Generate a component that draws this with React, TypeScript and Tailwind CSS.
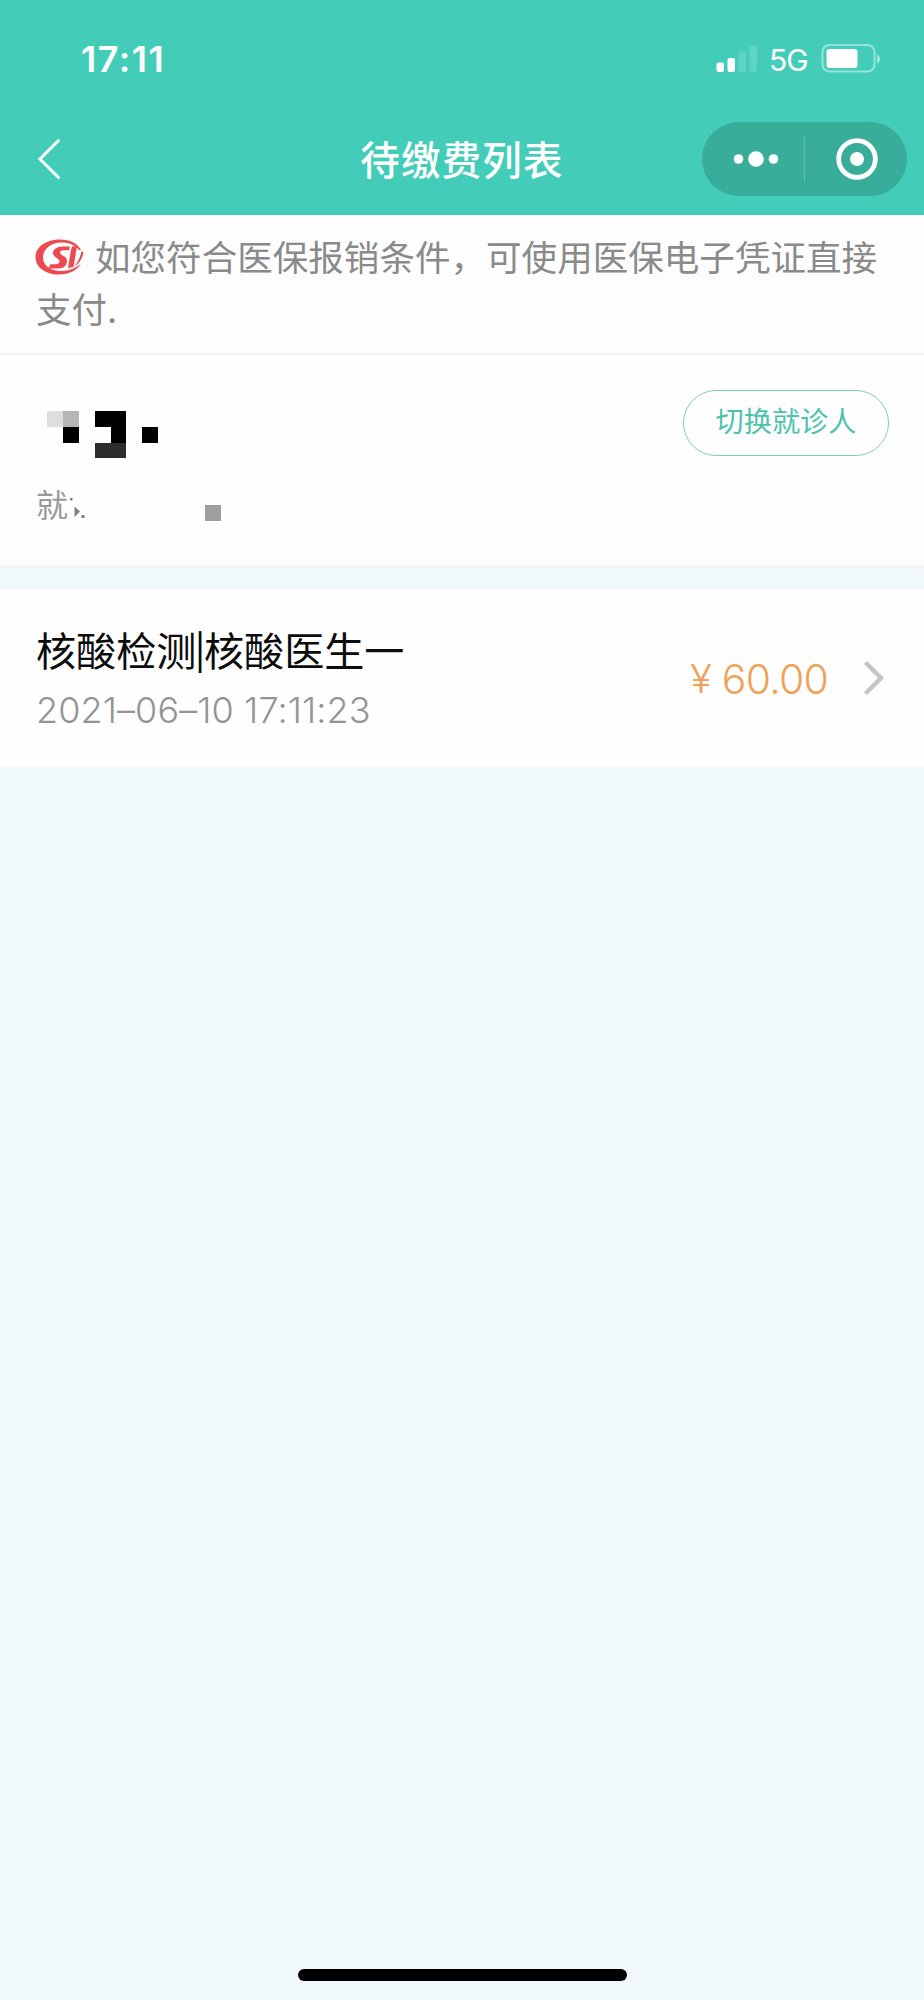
type Bill = {
  id: number;
  item: string;
  doctor: string;
  time: string;
  amount: string;
};

const bills: Bill[] = [
  { id: 1, item: "核酸检测", doctor: "核酸医生一", time: "2021–06–10 17:11:23", amount: "60.00" },
];

const StatusBar = () => (
  <div className="flex h-[118px] items-center justify-between pl-[81px] pr-[43px]">
    <span className="text-[36px] font-semibold leading-none tracking-[1.5px]">17:11</span>
    <div className="flex items-center">
      <svg width="42" height="28" viewBox="0 0 42 28" fill="currentColor">
        <rect x="0.5" y="17.5" width="7.5" height="9.5" rx="2" />
        <rect x="11.5" y="13" width="7.5" height="14" rx="2" />
        <rect x="22.5" y="6.5" width="7.5" height="20.5" rx="2" opacity="0.15" />
        <rect x="33.5" y="0.5" width="7.5" height="26.5" rx="2" opacity="0.15" />
      </svg>
      <span className="ml-[11px] w-[42px] pt-[2px] text-[30px] font-normal leading-none tracking-[-1px]">5G</span>
      <svg className="ml-[10px]" width="60" height="30" viewBox="0 0 60 30" fill="none">
        <rect x="1.5" y="1" width="52" height="26.5" rx="7" stroke="white" strokeOpacity="0.45" strokeWidth="2" />
        <rect x="5.5" y="5" width="31" height="19" rx="3" fill="white" />
        <path d="M56 10.5c2.2 1 3 2.5 3 4.5s-.8 3.5-3 4.5z" fill="white" fillOpacity="0.5" />
      </svg>
    </div>
  </div>
);

const NavBar = () => (
  <div className="grid h-[97px] grid-cols-[1fr_auto_1fr] items-start">
    <button className="ml-[37px] mt-[20px] w-fit" aria-label="返回">
      <svg width="25" height="42" viewBox="0 0 25 42" fill="none">
        <path d="M21.5 2.5 3 21 21.5 39.5" stroke="white" strokeWidth="3" strokeLinecap="round" />
      </svg>
    </button>
    <h1 className="mt-[17px] text-[39.5px] font-medium leading-[52px] tracking-[1.2px]">待缴费列表</h1>
    <div className="mr-[17px] mt-[4px] flex h-[74px] w-[205px] items-center justify-self-end rounded-full bg-[#38ae9a]">
      <button className="flex w-[102px] justify-center pl-[5px]" aria-label="更多">
        <svg width="46" height="18" viewBox="0 0 46 18" fill="white">
          <circle cx="5.5" cy="9" r="4.8" />
          <circle cx="23" cy="9" r="7.8" />
          <circle cx="40.5" cy="9" r="4.8" />
        </svg>
      </button>
      <span className="h-[46px] w-px bg-white/20" />
      <button className="flex w-[102px] justify-center pl-[2px]" aria-label="关闭">
        <svg width="42" height="42" viewBox="0 0 42 42" fill="none">
          <circle cx="21" cy="21" r="18.3" stroke="white" strokeWidth="4.8" />
          <circle cx="21" cy="21" r="7" fill="white" />
        </svg>
      </button>
    </div>
  </div>
);

const InsuranceLogo = () => (
  <svg className="-ml-px mr-[11px] inline-block align-[-4px]" width="49" height="36" viewBox="0 0 49 36" fill="#ec4a50">
    <path
      fillRule="evenodd"
      d="M46 11C42.5 4.5 35 .5 25 .5 11 .5.5 8 .5 18S10 35.5 24 35.5c10 0 18-4 22-11C41.5 29 34 32 26 32 15.5 32 8 26.5 8 18.500S15.500 3.500 26.500 3.500C34 3.500 40.500 6 44 11z"
    />
    <path d="M35 7.5H28c-6.5 0-10 3-10 6.5 0 4.5 6.5 5 6.5 8.500 0 2-2 3-9 2.800L13.500 29.500H23c6 0 9-3.500 9-8 0-4.500-7-5-7-8 0-1.500 1.500-2.300 4-2.300h5z" />
    <path d="M37 7.5 42 7 38.5 28 33 29 36 11z" />
    <path d="M46.5 12 48.5 13.5C47.5 19.5 44 24.5 39.5 27.5 43 22.5 45.5 18 46.5 12z" />
  </svg>
);

// name is masked with mosaic blocks
const MaskedName = () => (
  <svg className="ml-[11px]" width="112" height="48" viewBox="0 0 112 48" shapeRendering="crispEdges">
    <rect x="0" y="0" width="16" height="16" fill="#dedede" />
    <rect x="16" y="0" width="16" height="16" fill="#b6b6b6" />
    <rect x="16" y="16" width="16" height="16" fill="#000" />
    <path d="M48 0h31v32H64V16H48z" fill="#000" />
    <rect x="48" y="32" width="31" height="15" fill="#2c2c2d" />
    <rect x="95" y="16" width="16" height="16" fill="#000" />
  </svg>
);

const PatientCard = () => (
  <section className="flex h-[210px] justify-between bg-[#fefefe] pl-[36px] pr-[35px]">
    <div className="pt-[56px]">
      <MaskedName />
      <div className="mt-[24px] flex h-[48px] items-center text-[32px] text-[#999]">
        <span className="pb-[3px] leading-none">就</span>
        <svg width="160" height="36" viewBox="0 0 160 36" fill="#808080">
          <rect x="2" y="9" width="2.5" height="2.5" />
          <path d="M6.500 17.500 12 22.500 6.500 28z" />
          <rect x="13.5" y="26" width="3" height="3" />
          <rect x="137" y="16" width="16" height="16" fill="#9e9e9e" />
        </svg>
      </div>
    </div>
    <button className="mt-[35px] h-[66px] w-[206px] rounded-full border border-[#82c9c0] pb-px text-[28.2px] leading-none text-[#4cc4ad]">
      切换就诊人
    </button>
  </section>
);

const BillRow = ({ bill }: { bill: Bill }) => (
  <li className="flex h-[178px] items-center justify-between bg-[#fefefe] pl-[36px] pr-[39px]">
    <div className="pt-[3px]">
      <p className="flex items-center text-[40.1px] leading-[60px] text-[#0c0c0c]">
        {bill.item}
        <span className="-mx-[2px] text-[35px]">|</span>
        {bill.doctor}
      </p>
      <p className="text-[36px] font-light leading-[56px] tracking-[0.1px] text-[#949494]">{bill.time}</p>
    </div>
    <div className="flex items-center text-[#eea258]">
      <span className="pt-[2px] text-[40px] font-light leading-none">¥</span>
      <span className="ml-[10px] pt-[2px] text-[41px] font-light leading-none tracking-[-0.8px]">{bill.amount}</span>
      <svg className="ml-[35px]" width="22" height="36" viewBox="0 0 22 36" fill="none">
        <path d="M2.5 2.5 18 18 2.5 33.5" stroke="#c5c5c8" strokeWidth="4.5" />
      </svg>
    </div>
  </li>
);

export default function App() {
  return (
    <div className="flex h-[2000px] w-[924px] flex-col bg-[#f0f8fb] font-['Inter','Noto_Sans_CJK_SC',sans-serif]">
      <header className="bg-[#43cdb9] text-white">
        <StatusBar />
        <NavBar />
      </header>
      <section className="h-[140px] border-b-2 border-[#f3f3f4] bg-[#fdfdfd] px-[36px] pt-[18px] text-[35.5px] leading-[52px] tracking-[0.05px] text-[#8a8a8a]">
        <InsuranceLogo />
        如您符合医保报销条件，可使用医保电子凭证直接支付.
      </section>
      <PatientCard />
      <ul className="border-t-[3px] border-[#f2f3f5] pt-[21px]">
        {bills.map((b) => (
          <BillRow key={b.id} bill={b} />
        ))}
      </ul>
      <div className="mx-auto mb-[19px] mt-auto h-[12px] w-[329px] rounded-full bg-black" />
    </div>
  );
}
